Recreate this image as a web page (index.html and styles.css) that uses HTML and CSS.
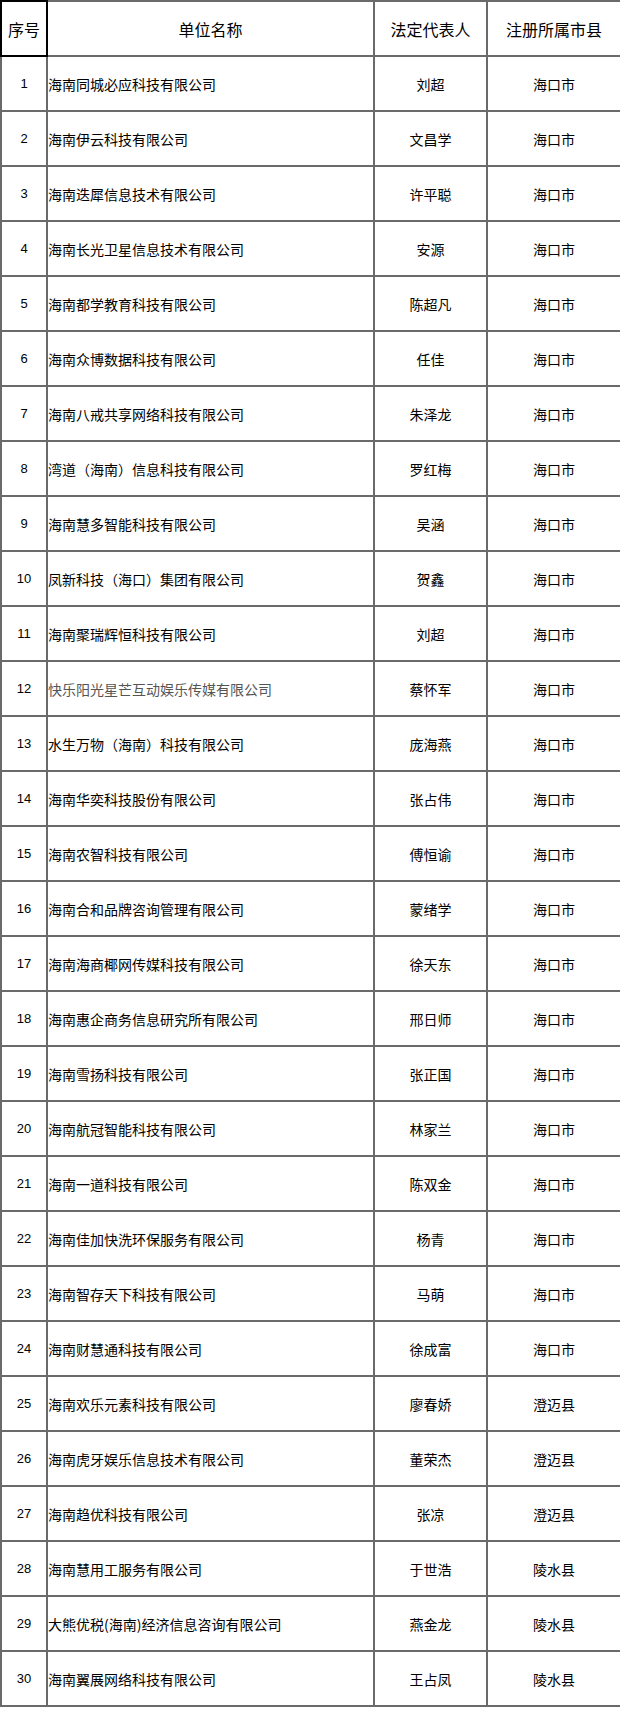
FILE: index.html
```html
<!DOCTYPE html>
<html lang="zh-CN">
<head>
<meta charset="utf-8">
<title>名单</title>
<link rel="stylesheet" href="styles.css">
</head>
<body>
<table class="list">
  <colgroup>
    <col class="c-no"><col class="c-name"><col class="c-rep"><col class="c-city">
  </colgroup>
  <thead>
    <tr class="head">
      <th class="sel">序号</th><th>单位名称</th><th>法定代表人</th><th>注册所属市县</th>
    </tr>
  </thead>
  <tbody>
    <tr><td class="no">1</td><td class="name">海南同城必应科技有限公司</td><td>刘超</td><td>海口市</td></tr>
    <tr><td class="no">2</td><td class="name">海南伊云科技有限公司</td><td>文昌学</td><td>海口市</td></tr>
    <tr><td class="no">3</td><td class="name">海南迭犀信息技术有限公司</td><td>许平聪</td><td>海口市</td></tr>
    <tr><td class="no">4</td><td class="name">海南长光卫星信息技术有限公司</td><td>安源</td><td>海口市</td></tr>
    <tr><td class="no">5</td><td class="name">海南都学教育科技有限公司</td><td>陈超凡</td><td>海口市</td></tr>
    <tr><td class="no">6</td><td class="name">海南众博数据科技有限公司</td><td>任佳</td><td>海口市</td></tr>
    <tr><td class="no">7</td><td class="name">海南八戒共享网络科技有限公司</td><td>朱泽龙</td><td>海口市</td></tr>
    <tr><td class="no">8</td><td class="name">湾道（海南）信息科技有限公司</td><td>罗红梅</td><td>海口市</td></tr>
    <tr><td class="no">9</td><td class="name">海南慧多智能科技有限公司</td><td>吴涵</td><td>海口市</td></tr>
    <tr><td class="no">10</td><td class="name">凤新科技（海口）集团有限公司</td><td>贺鑫</td><td>海口市</td></tr>
    <tr><td class="no">11</td><td class="name">海南聚瑞辉恒科技有限公司</td><td>刘超</td><td>海口市</td></tr>
    <tr><td class="no">12</td><td class="name muted">快乐阳光星芒互动娱乐传媒有限公司</td><td>蔡怀军</td><td>海口市</td></tr>
    <tr><td class="no">13</td><td class="name">水生万物（海南）科技有限公司</td><td>庞海燕</td><td>海口市</td></tr>
    <tr><td class="no">14</td><td class="name">海南华奕科技股份有限公司</td><td>张占伟</td><td>海口市</td></tr>
    <tr><td class="no">15</td><td class="name">海南农智科技有限公司</td><td>傅恒谕</td><td>海口市</td></tr>
    <tr><td class="no">16</td><td class="name">海南合和品牌咨询管理有限公司</td><td>蒙绪学</td><td>海口市</td></tr>
    <tr><td class="no">17</td><td class="name">海南海商椰网传媒科技有限公司</td><td>徐天东</td><td>海口市</td></tr>
    <tr><td class="no">18</td><td class="name">海南惠企商务信息研究所有限公司</td><td>邢日师</td><td>海口市</td></tr>
    <tr><td class="no">19</td><td class="name">海南雪扬科技有限公司</td><td>张正国</td><td>海口市</td></tr>
    <tr><td class="no">20</td><td class="name">海南航冠智能科技有限公司</td><td>林家兰</td><td>海口市</td></tr>
    <tr><td class="no">21</td><td class="name">海南一道科技有限公司</td><td>陈双金</td><td>海口市</td></tr>
    <tr><td class="no">22</td><td class="name">海南佳加快洗环保服务有限公司</td><td>杨青</td><td>海口市</td></tr>
    <tr><td class="no">23</td><td class="name">海南智存天下科技有限公司</td><td>马萌</td><td>海口市</td></tr>
    <tr><td class="no">24</td><td class="name">海南财慧通科技有限公司</td><td>徐成富</td><td>海口市</td></tr>
    <tr><td class="no">25</td><td class="name">海南欢乐元素科技有限公司</td><td>廖春娇</td><td>澄迈县</td></tr>
    <tr><td class="no">26</td><td class="name">海南虎牙娱乐信息技术有限公司</td><td>董荣杰</td><td>澄迈县</td></tr>
    <tr><td class="no">27</td><td class="name">海南趋优科技有限公司</td><td>张凉</td><td>澄迈县</td></tr>
    <tr><td class="no">28</td><td class="name">海南慧用工服务有限公司</td><td>于世浩</td><td>陵水县</td></tr>
    <tr><td class="no">29</td><td class="name">大熊优税(海南)经济信息咨询有限公司</td><td>燕金龙</td><td>陵水县</td></tr>
    <tr><td class="no">30</td><td class="name">海南翼展网络科技有限公司</td><td>王占凤</td><td>陵水县</td></tr>
  </tbody>
</table>
</body>
</html>
```

FILE: styles.css
```css
html, body {
  margin: 0;
  padding: 0;
  background: #ffffff;
}

body {
  font-family: "Noto Sans CJK SC", "Noto Sans", sans-serif;
  color: #000;
}

.list {
  width: 620px;
  border-collapse: collapse;
  table-layout: fixed;
}

.c-no { width: 46px; }
.c-name { width: 327px; }
.c-rep { width: 113px; }
.c-city { width: 134px; }

.list th,
.list td {
  border: 2px solid #6a6a6a;
  padding: 0;
  text-align: center;
  vertical-align: middle;
  font-size: 14px;
  font-weight: normal;
  line-height: 1;
  white-space: nowrap;
  overflow: hidden;
}

.list th {
  font-size: 16px;
  height: 53px;
}

.list th.sel {
  border: 2px solid #000;
}

.list td {
  height: 53px;
}

.list td.no {
  font-family: "Liberation Sans", "DejaVu Sans", sans-serif;
  font-size: 13px;
}

.list td.name {
  text-align: left;
  padding-left: 0;
}

.list td.muted {
  color: #555;
}
```
